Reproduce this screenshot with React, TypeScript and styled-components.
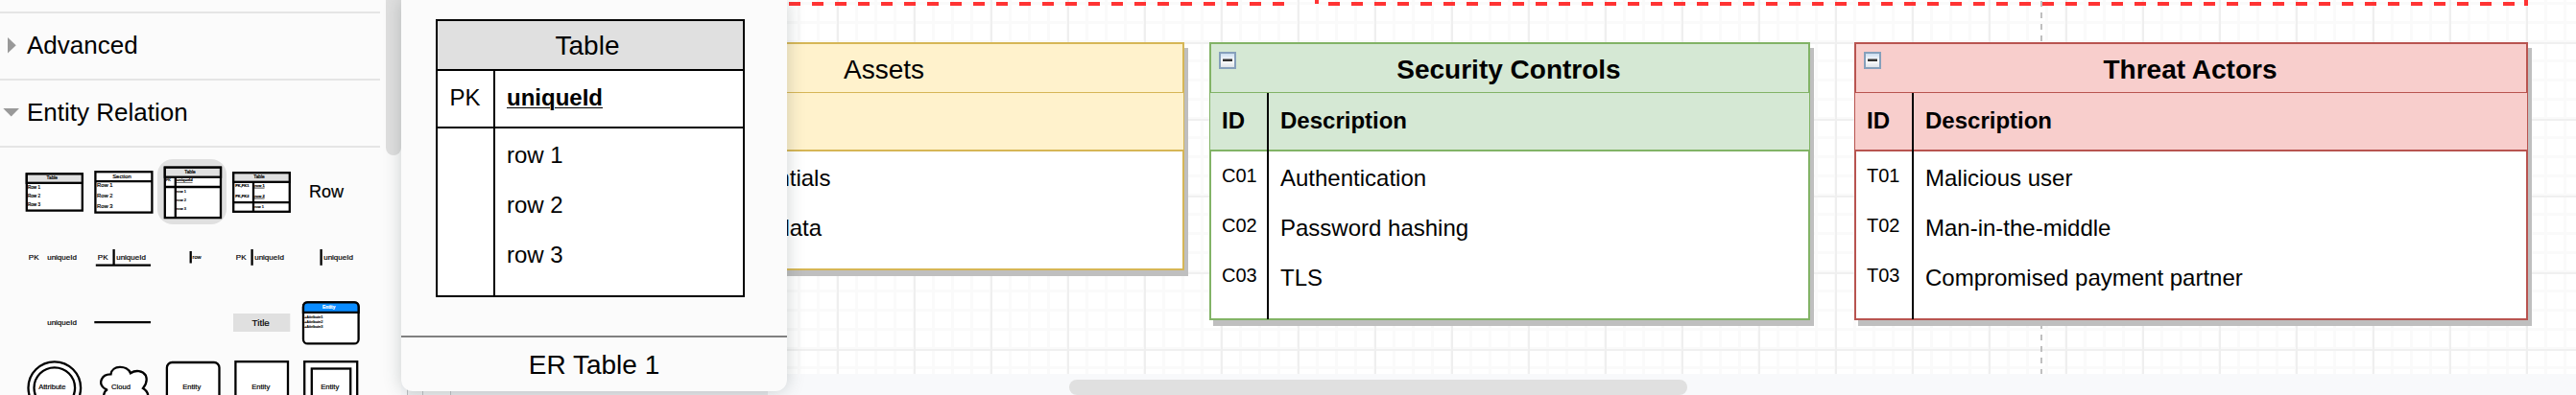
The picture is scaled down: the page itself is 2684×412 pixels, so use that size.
import React from "react";
import styled, { createGlobalStyle } from "styled-components";

const GlobalStyle = createGlobalStyle`
  * { box-sizing: border-box; }
  body { margin: 0; background: #fff; }
  body, svg text { font-family: "Liberation Sans", Arial, Helvetica, sans-serif; color: #000; }
`;

const Window = styled.div`
  position: relative;
  display: flex;
  width: 2684px;
  height: 412px;
  overflow: hidden;
`;

/* ---------- Shape library ---------- */

const Sidebar = styled.aside`
  display: flex;
  width: 418px;
  height: 412px;
  flex: none;
  background: #fbfbfb;
`;

const Library = styled.div`
  width: 396px;
  height: 412px;
  overflow: hidden;
  padding-top: 12px;
`;

const SectionTitle = styled.div`
  display: flex;
  align-items: center;
  height: 70px;
  border-top: 2px solid #e5e5e5;
  padding-bottom: 2px;
  font-size: 26px;
  line-height: 30px;
`;

const Arrow = styled.svg`
  width: 28px;
  height: 24px;
  flex: none;
  fill: #999;
`;

const Palette = styled.div`
  display: grid;
  grid-template-columns: repeat(5, 72px);
  grid-auto-rows: 68px;
  border-top: 2px solid #e5e5e5;
  padding: 12px 0 0 20px;
`;

const Cell = styled.div<{ $active?: boolean }>`
  border-radius: 16px;
  background: ${(p) => (p.$active ? "#e0e0e0" : "transparent")};
  svg { display: block; }
`;

const ScrollTrack = styled.div`
  width: 22px;
  padding-left: 6px;
`;

const ScrollThumb = styled.div`
  width: 16px;
  height: 162px;
  border-radius: 0 0 8px 8px;
  background: #dfdfdf;
`;

/* ---------- Canvas ---------- */

const Workspace = styled.main`
  display: flex;
  flex-direction: column;
  flex: 1;
`;

const Canvas = styled.div`
  position: relative;
  height: 390px;
  background-color: #fff;
  background-image:
    linear-gradient(90deg, #efefef 2px, transparent 2px),
    linear-gradient(#f0f0f0 2px, transparent 2px),
    linear-gradient(90deg, #fafafa 3px, transparent 3px),
    linear-gradient(#fafafa 3px, transparent 3px);
  background-size: 80px 80px, 80px 80px, 20px 20px, 20px 20px;
  background-position: 54px 0, 0 44px, 13px 0, 0 2px;
`;

const CanvasLines = styled.svg`
  position: absolute;
  inset: 0;
`;

const BottomBar = styled.div`
  height: 22px;
  padding: 6px 0 0 696px;
  background: #f8f9fb;
`;

const BottomThumb = styled.div`
  width: 644px;
  height: 16px;
  border-radius: 8px;
  background: #e0e0e0;
`;

const PageTabs = styled.div`
  position: absolute;
  left: 424px;
  top: 400px;
  display: flex;
  height: 12px;
  width: 376px;
  background: #e6e7ea;
`;

const PageTab = styled.div<{ $width: number }>`
  width: ${(p) => p.$width}px;
  border-left: 1px solid #bcbfc2;
  background: #eceeef;
  &:last-child { border-right: 1px solid #bcbfc2; }
`;

/* ---------- Entity tables ---------- */

const Entity = styled.section<{ $x: number; $width: number; $line: string; $fill: string }>`
  --line: ${(p) => p.$line};
  --fill: ${(p) => p.$fill};
  position: absolute;
  left: ${(p) => p.$x - 418}px;
  top: 44px;
  width: ${(p) => p.$width}px;
  border: 2px solid var(--line);
  background: #fff;
  box-shadow: 4px 6px 0 #bfbfbf;
`;

const EntityTitle = styled.div<{ $bold: boolean }>`
  height: 51px;
  padding: 3px 2px 0 0;
  border-bottom: 1px solid var(--line);
  background: var(--fill);
  font-size: 28px;
  line-height: 48px;
  font-weight: ${(p) => (p.$bold ? 700 : 400)};
  text-align: center;
`;

const EntityBody = styled.div`
  display: flex;
  margin: 0 -1px -1px;
`;

const Column = styled.div<{ $narrow?: boolean }>`
  display: flex;
  flex-direction: column;
  width: ${(p) => (p.$narrow ? "61px" : "auto")};
  flex: ${(p) => (p.$narrow ? "none" : "1")};
  border-right: ${(p) => (p.$narrow ? "2px solid #000" : "none")};
  padding-bottom: 19px;
`;

const HeadCell = styled.div`
  height: 61px;
  padding-left: 12px;
  border-bottom: 2px solid var(--line);
  background: var(--fill);
  font-size: 24px;
  font-weight: 700;
  line-height: 58px;
`;

const IdCell = styled.div`
  height: 52px;
  padding-left: 12px;
  font-size: 20px;
  line-height: 50px;
`;

const TextCell = styled.div`
  height: 52px;
  padding: 2px 0 0 12px;
  font-size: 24px;
  line-height: 51px;
  white-space: nowrap;
`;

const CollapseButton = styled.svg`
  position: absolute;
  left: 8px;
  top: 8px;
`;

/* ---------- Preview popup ---------- */

const Popup = styled.div`
  position: absolute;
  left: 418px;
  top: 0;
  width: 402px;
  height: 408px;
  border-radius: 0 0 12px 12px;
  background: #fbfbfb;
  box-shadow: 0 0 18px rgba(60, 75, 75, 0.25);
`;

const PopupBody = styled.div`
  height: 350px;
  padding: 20px 44px 0 36px;
`;

const PopupCaption = styled.div`
  height: 58px;
  border-top: 2px solid #808080;
  font-size: 28px;
  line-height: 57px;
  text-align: center;
`;

const PreviewTable = styled.div`
  display: grid;
  grid-template-columns: 60px 1fr;
  grid-template-rows: 52px 60px 174px;
  height: 290px;
  border: 2px solid #000;
  background: #fff;
`;

const PreviewTitle = styled.div`
  grid-column: 1 / 3;
  border-bottom: 2px solid #000;
  background: #e0e0e0;
  padding-right: 6px;
  font-size: 28px;
  line-height: 52px;
  text-align: center;
`;

const PreviewKey = styled.div`
  border-right: 2px solid #000;
  border-bottom: 2px solid #000;
  padding-right: 1px;
  font-size: 24px;
  line-height: 55px;
  text-align: center;
`;

const PreviewName = styled.div`
  border-bottom: 2px solid #000;
  padding-left: 12px;
  font-size: 24px;
  line-height: 55px;
  font-weight: 700;
  text-decoration: underline;
  text-decoration-thickness: 1px;
  text-underline-offset: 2px;
`;

const PreviewSide = styled.div`
  border-right: 2px solid #000;
`;

const PreviewRows = styled.div`
  padding: 2px 0 0 12px;
  font-size: 24px;
  line-height: 52px;
`;

/* ---------- Thumbnails ---------- */

type LabelProps = {
  x: number;
  y: number;
  size: number;
  children: string;
  mid?: boolean;
  bold?: boolean;
  under?: boolean;
  fill?: string;
};

const Label = ({ x, y, size, children, mid, bold, under, fill = "#000" }: LabelProps) => (
  <text
    x={x}
    y={y}
    fontSize={size}
    fill={fill}
    stroke={fill}
    strokeWidth="0.2"
    textAnchor={mid ? "middle" : "start"}
    fontWeight={bold ? 700 : 400}
    textDecoration={under ? "underline" : undefined}
  >
    {children}
  </text>
);

const Thumb = ({ children, active }: { children?: React.ReactNode; active?: boolean }) => (
  <Cell $active={active}>
    <svg width="72" height="68" fill="none" stroke="#000" strokeWidth="2.3">
      {children}
    </svg>
  </Cell>
);

const Thumbnails = () => (
  <Palette>
    <Thumb>
      <rect x="7.8" y="15.4" width="58" height="38.2" fill="#fff" />
      <rect x="7.8" y="15.4" width="58" height="9.4" fill="#e0e0e0" />
      <Label x={34.3} y={21.4} size={4.8} mid>Table</Label>
      <Label x={9} y={30.6} size={4.6}>Row 1</Label>
      <Label x={9} y={39.9} size={4.6}>Row 2</Label>
      <Label x={9} y={49.4} size={4.6}>Row 3</Label>
    </Thumb>
    <Thumb>
      <rect x="7.4" y="13.2" width="59" height="42.4" fill="#fff" />
      <path d="M7.4 23.2H66.4" />
      <Label x={35} y={19.6} size={5.9} mid>Section</Label>
      <Label x={9} y={29.4} size={5.8}>Row 1</Label>
      <Label x={9} y={40.4} size={5.8}>Row 2</Label>
      <Label x={9} y={51.4} size={5.8}>Row 3</Label>
    </Thumb>
    <Thumb active>
      <rect x="7.8" y="8.7" width="58.2" height="52.4" fill="#fff" />
      <rect x="7.8" y="8.7" width="58.2" height="10" fill="#e0e0e0" />
      <path d="M7.8 29H66M18.8 18.7V61" />
      <Label x={34} y={14.6} size={4.8} mid>Table</Label>
      <Label x={8.7} y={23.2} size={4}>PK</Label>
      <Label x={20} y={23.2} size={4} bold under>uniqueId</Label>
      <Label x={20} y={34.8} size={4.1}>row 1</Label>
      <Label x={20} y={44.1} size={4.1}>row 2</Label>
      <Label x={20} y={53.4} size={4.1}>row 3</Label>
    </Thumb>
    <Thumb>
      <rect x="7.2" y="14.2" width="58.6" height="40.6" fill="#fff" />
      <rect x="7.2" y="14.2" width="58.6" height="9.6" fill="#e0e0e0" />
      <path d="M7.2 45.2H65.8M28 23.7V55" />
      <Label x={34} y={19.8} size={4.8} mid>Table</Label>
      <Label x={9.2} y={28.9} size={4} bold>PK,FK1</Label>
      <Label x={9.2} y={39.8} size={4} bold>PK,FK2</Label>
      <Label x={29.2} y={28.9} size={4} bold under>row 1</Label>
      <Label x={29.2} y={39.8} size={4} bold under>row 2</Label>
      <Label x={29.2} y={51.2} size={4}>row 1</Label>
    </Thumb>
    <Thumb>
      <Label x={13.9} y={39.8} size={18}>Row</Label>
    </Thumb>

    <Thumb>
      <Label x={9.8} y={37} size={8}>PK</Label>
      <Label x={29.2} y={37} size={8}>uniqueId</Label>
    </Thumb>
    <Thumb>
      <path d="M26.6 26V42.6M7.8 42.6H65" />
      <Label x={9.8} y={37} size={8}>PK</Label>
      <Label x={29.2} y={37} size={8}>uniqueId</Label>
    </Thumb>
    <Thumb>
      <path d="M34.7 28V40.5" />
      <Label x={36.6} y={36} size={5.6}>row</Label>
    </Thumb>
    <Thumb>
      <path d="M26.6 26V42.8" />
      <Label x={9.8} y={37} size={8}>PK</Label>
      <Label x={29.2} y={37} size={8}>uniqueId</Label>
    </Thumb>
    <Thumb>
      <path d="M26.6 26V42.8" />
      <Label x={29.2} y={37} size={8}>uniqueId</Label>
    </Thumb>

    <Thumb>
      <Label x={29.2} y={37} size={8}>uniqueId</Label>
    </Thumb>
    <Thumb>
      <path d="M6.3 34.1H65" />
    </Thumb>
    <Thumb />
    <Thumb>
      <rect x="7" y="25" width="59.3" height="19" fill="#e0e0e0" stroke="none" />
      <Label x={35.7} y={38} size={9.8} mid>Title</Label>
    </Thumb>
    <Thumb>
      <rect x="8" y="13.4" width="57.6" height="43" rx="4.5" fill="#fff" />
      <path d="M8 23.8V18Q8 13.4 12.5 13.4H61Q65.6 13.4 65.6 18V23.8Z" fill="#0a8cff" />
      <Label x={34.7} y={19.6} size={4.8} mid bold fill="#fff">Entity</Label>
      <Label x={9} y={29.8} size={4}>+Attribute1</Label>
      <Label x={9} y={34.8} size={4}>+Attribute2</Label>
      <Label x={9} y={39.8} size={4}>+Attribute3</Label>
    </Thumb>

    <Thumb>
      <circle cx="36.8" cy="34.6" r="27.3" fill="#fff" />
      <circle cx="36.8" cy="34.6" r="21.3" fill="#fff" />
      <Label x={34.3} y={35.8} size={7.6} mid>Attribute</Label>
    </Thumb>
    <Thumb>
      <path
        d="M20 36.2Q15.5 38 16 46H62Q63.5 39 57 35Q62.5 28.5 59.8 21.5C56.5 16.5 49.5 15.6 44 19.2C40.5 10.5 24.5 10.5 23.5 20.4C13.5 20.2 9.5 30.5 17.5 35.6L20 37"
        fill="#fff"
      />
      <Label x={34} y={35.8} size={7.6} mid>Cloud</Label>
    </Thumb>
    <Thumb>
      <rect x="9.9" y="8" width="54.6" height="54" rx="5.5" fill="#fff" />
      <Label x={35.7} y={35.8} size={7.6} mid>Entity</Label>
    </Thumb>
    <Thumb>
      <rect x="9.4" y="7.2" width="54.6" height="54" fill="#fff" />
      <Label x={35.7} y={35.8} size={7.6} mid>Entity</Label>
    </Thumb>
    <Thumb>
      <rect x="9.2" y="7.2" width="55" height="54" fill="#fff" />
      <rect x="16.8" y="14.5" width="40.4" height="40" fill="#fff" />
      <Label x={35.7} y={35.8} size={7.6} mid>Entity</Label>
    </Thumb>
  </Palette>
);

/* ---------- Diagram ---------- */

type EntityTableProps = {
  title: string;
  x: number;
  width: number;
  line: string;
  fill: string;
  bold?: boolean;
  head?: [string, string];
  rows: [string, string][];
};

const EntityTable = ({ title, x, width, line, fill, bold = false, head, rows }: EntityTableProps) => (
  <Entity $x={x} $width={width} $line={line} $fill={fill}>
    <EntityTitle $bold={bold}>{title}</EntityTitle>
    <EntityBody>
      <Column $narrow>
        <HeadCell>{head?.[0]}</HeadCell>
        {rows.map(([id], i) => (
          <IdCell key={i}>{id}</IdCell>
        ))}
      </Column>
      <Column>
        <HeadCell>{head?.[1]}</HeadCell>
        {rows.map(([, text], i) => (
          <TextCell key={i}>{text}</TextCell>
        ))}
      </Column>
    </EntityBody>
    {head && (
      <CollapseButton width="18" height="18">
        <defs>
          <linearGradient id={`face-${x}`} x1="0" y1="0" x2="0" y2="1">
            <stop offset="0" stopColor="#c3d8ee" />
            <stop offset="0.5" stopColor="#ffffff" />
            <stop offset="1" stopColor="#dadfe5" />
          </linearGradient>
        </defs>
        <rect x="1" y="1" width="16" height="16" fill={`url(#face-${x})`} stroke="#86a0bb" strokeWidth="2" />
        <rect x="4" y="7.5" width="10" height="2.5" fill="#333" />
      </CollapseButton>
    )}
  </Entity>
);

const Diagram = () => (
  <Canvas>
    <CanvasLines width="2266" height="390" fill="none">
      <g stroke="#ff3333" strokeWidth="4">
        <path d="M404 4H920" strokeDasharray="12 12" />
        <path d="M954 0V4" />
        <path d="M966 4H2202" strokeDasharray="12 12" />
        <path d="M2214 0V6" />
      </g>
      <path d="M1709 1V390" stroke="#bfbfbf" strokeWidth="2" strokeDasharray="6 6" />
    </CanvasLines>
    <EntityTable
      title="Assets"
      x={610}
      width={624}
      line="#d6b656"
      fill="#fff2cc"
      rows={[
        ["", "Login credentials"],
        ["", "Cardholder data"],
      ]}
    />
    <EntityTable
      title="Security Controls"
      x={1260}
      width={626}
      line="#82b366"
      fill="#d5e8d4"
      bold
      head={["ID", "Description"]}
      rows={[
        ["C01", "Authentication"],
        ["C02", "Password hashing"],
        ["C03", "TLS"],
      ]}
    />
    <EntityTable
      title="Threat Actors"
      x={1932}
      width={702}
      line="#b85450"
      fill="#f8cecc"
      bold
      head={["ID", "Description"]}
      rows={[
        ["T01", "Malicious user"],
        ["T02", "Man-in-the-middle"],
        ["T03", "Compromised payment partner"],
      ]}
    />
  </Canvas>
);

const ShapePreview = () => (
  <Popup>
    <PopupBody>
      <PreviewTable>
        <PreviewTitle>Table</PreviewTitle>
        <PreviewKey>PK</PreviewKey>
        <PreviewName>uniqueId</PreviewName>
        <PreviewSide />
        <PreviewRows>
          <div>row 1</div>
          <div>row 2</div>
          <div>row 3</div>
        </PreviewRows>
      </PreviewTable>
    </PopupBody>
    <PopupCaption>ER Table 1</PopupCaption>
  </Popup>
);

export default function App() {
  return (
    <Window>
      <GlobalStyle />
      <Sidebar>
        <Library>
          <SectionTitle>
            <Arrow><path d="M8 4L16.7 12.3L8 20.5Z" /></Arrow>
            Advanced
          </SectionTitle>
          <SectionTitle>
            <Arrow><path d="M3.3 8H20L11.7 16.5Z" /></Arrow>
            Entity Relation
          </SectionTitle>
          <Thumbnails />
        </Library>
        <ScrollTrack><ScrollThumb /></ScrollTrack>
      </Sidebar>
      <Workspace>
        <Diagram />
        <BottomBar><BottomThumb /></BottomBar>
      </Workspace>
      <PageTabs>
        <PageTab $width={16} />
        <PageTab $width={30} />
      </PageTabs>
      <ShapePreview />
    </Window>
  );
}
